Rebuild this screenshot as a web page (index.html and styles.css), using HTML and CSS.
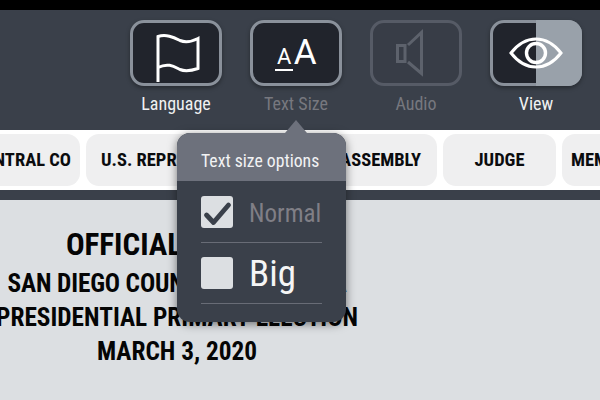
FILE: index.html
```html
<!DOCTYPE html>
<html lang="en">
<head>
<meta charset="utf-8">
<title>Ballot</title>
<link rel="stylesheet" href="styles.css">
</head>
<body>
<div class="app">
  <div class="topbar"></div>
  <header class="toolbar">
    <div class="tool">
      <div class="tool-btn">
        <svg width="92" height="66" viewBox="0 0 92 66"><path d="M28 62V16.500C36 14 43 17 50 20.500c6 2.500 12 1 18-2V48.500c-6 2-12 3.500-18 1-6-3-12-7-22-2" fill="none" stroke="#fff" stroke-width="3"/></svg>
      </div>
      <span class="tool-label">Language</span>
    </div>
    <div class="tool">
      <div class="tool-btn">
        <span class="aa"><span class="aa-small">A</span><span class="aa-big">A</span></span>
      </div>
      <span class="tool-label dim">Text Size</span>
    </div>
    <div class="tool off">
      <div class="tool-btn">
        <svg width="92" height="66" viewBox="0 0 92 66"><path d="M27.500 25.500h7.500v16h-7.500zM38 25l13.500-12.500v41L38 42" fill="none" stroke="#5d626c" stroke-width="3"/></svg>
      </div>
      <span class="tool-label dim">Audio</span>
    </div>
    <div class="tool">
      <div class="tool-btn view">
        <svg width="92" height="66" viewBox="0 0 92 66"><path d="M21 33c7-9 15-14 25-14s18 5 25 14c-7 9-15 14-25 14s-18-5-25-14z" fill="none" stroke="#fff" stroke-width="3"/><circle cx="46" cy="33" r="9.500" fill="none" stroke="#fff" stroke-width="3.400"/></svg>
      </div>
      <span class="tool-label">View</span>
    </div>
  </header>
  <nav class="tabs">
    <div class="tab t1">CENTRAL CO</div>
    <div class="tab t2">U.S. REPRESENTATIVE</div>
    <div class="tab t3">STATE ASSEMBLY</div>
    <div class="tab t4">JUDGE</div>
    <div class="tab t5">MEMBER</div>
  </nav>
  <div class="divider"></div>
  <main class="ballot">
    <h1>OFFICIAL BALLOT</h1>
    <h2 class="county">SAN DIEGO COUNTY, CALIFORNIA</h2>
    <h2>PRESIDENTIAL PRIMARY ELECTION</h2>
    <h2>MARCH 3, 2020</h2>
  </main>
  <aside class="popup">
    <div class="popup-head">Text size options</div>
    <div class="popup-body">
      <div class="opt">
        <span class="box"><svg width="32" height="32" viewBox="0 0 32 32"><path d="M5.500 19l7 7.500L27.500 9" fill="none" stroke="#3a404a" stroke-width="4.800" stroke-linecap="round" stroke-linejoin="round"/></svg></span>
        <span class="opt-normal">Normal</span>
      </div>
      <div class="opt">
        <span class="box"></span>
        <span class="opt-big">Big</span>
      </div>
    </div>
  </aside>
</div>
</body>
</html>
```
FILE: styles.css
```css
* { box-sizing: border-box; margin: 0; padding: 0; }
html, body { width: 600px; height: 400px; overflow: hidden; }
body { font-family: Roboto, "Liberation Sans", sans-serif; font-stretch: 75%; }
.app { position: relative; width: 600px; height: 400px; overflow: hidden; background: #dcdfe2; }
.topbar { height: 10px; background: #000; }
.toolbar { height: 120px; background: #3a404a; display: flex; gap: 28px; padding: 10px 18px 0 130px; }
.tool { width: 92px; display: flex; flex-direction: column; align-items: center; }
.tool-btn { width: 92px; height: 66px; border: 3px solid #8a919b; border-radius: 14px; background: #21242c; display: flex; align-items: center; justify-content: center; box-shadow: 0 2px 4px rgba(0,0,0,.35); position: relative; }
.tool-btn svg { position: absolute; left: -3px; top: -3px; z-index: 1; }
.off .tool-btn { background: #383d47; border-color: #565b66; box-shadow: none; }
.view::after { content: ""; position: absolute; left: 43px; right: -3px; top: -3px; bottom: -3px; background: #99a1aa; border-radius: 0 14px 14px 0; }
.tool-label { margin-top: 8px; font-size: 18px; line-height: 20px; color: #f0f1f2; }
.tool-label.dim { color: #77787f; }
.aa { display: flex; align-items: flex-end; color: #fff; font-stretch: 100%; margin-top: 3px; }
.aa-small { font-size: 22px; line-height: 21px; border-bottom: 2px solid #fff; margin-right: 1px; padding: 0 1.500px 2px; }
.aa-big { font-size: 35px; line-height: 30px; margin-bottom: 3px; }
.tabs { height: 60px; background: #fff; display: flex; align-items: center; gap: 6px; margin-left: -40px; width: 680px; overflow: hidden; }
.tab { height: 52px; flex: none; background: #efeff0; border-radius: 13px; display: flex; align-items: center; font-size: 18.500px; font-weight: 700; color: #0b0c0e; white-space: nowrap; }
.t1 { width: 120px; justify-content: flex-end; padding-right: 9px; }
.t2 { width: 170px; padding-left: 15px; }
.t3 { width: 175px; justify-content: flex-end; padding-right: 16px; }
.t4 { width: 113px; justify-content: center; }
.t5 { width: 113px; padding-left: 9px; }
.divider { height: 10px; background: #3a404a; }
.ballot { width: 354px; padding-top: 25px; display: flex; flex-direction: column; align-items: center; color: #050505; white-space: nowrap; }
.ballot h1 { font-size: 31px; line-height: 40px; margin-bottom: 2px; font-weight: 700; }
.ballot h2 { font-size: 25.300px; line-height: 34px; font-weight: 700; }
.ballot .county { letter-spacing: -.15px; }
.popup { position: absolute; left: 177px; top: 133px; width: 169px; height: 189px; background: #3a404a; border-radius: 13px; box-shadow: 0 2px 10px rgba(0,0,0,.5); }
.popup::before { content: ""; position: absolute; left: 108px; top: -13px; border: 11px solid transparent; border-top: 0; border-bottom: 13px solid #6d717c; }
.popup-head { height: 48px; background: #6d717c; border-radius: 13px 13px 0 0; padding-left: 24px; line-height: 57px; font-size: 17.700px; color: #f2f3f4; }
.popup-body { padding: 0 24px; }
.opt { height: 61px; display: flex; align-items: center; gap: 16px; border-bottom: 1px solid #686c76; }
.opt:first-child { height: 62px; }
.box { width: 32px; height: 32px; flex: none; background: #dcdfe2; border-radius: 3px; }
.opt-normal { font-size: 25px; color: #807f86; padding-top: 4px; }
.opt-big { font-size: 37px; color: #f5f5f5; }
```
